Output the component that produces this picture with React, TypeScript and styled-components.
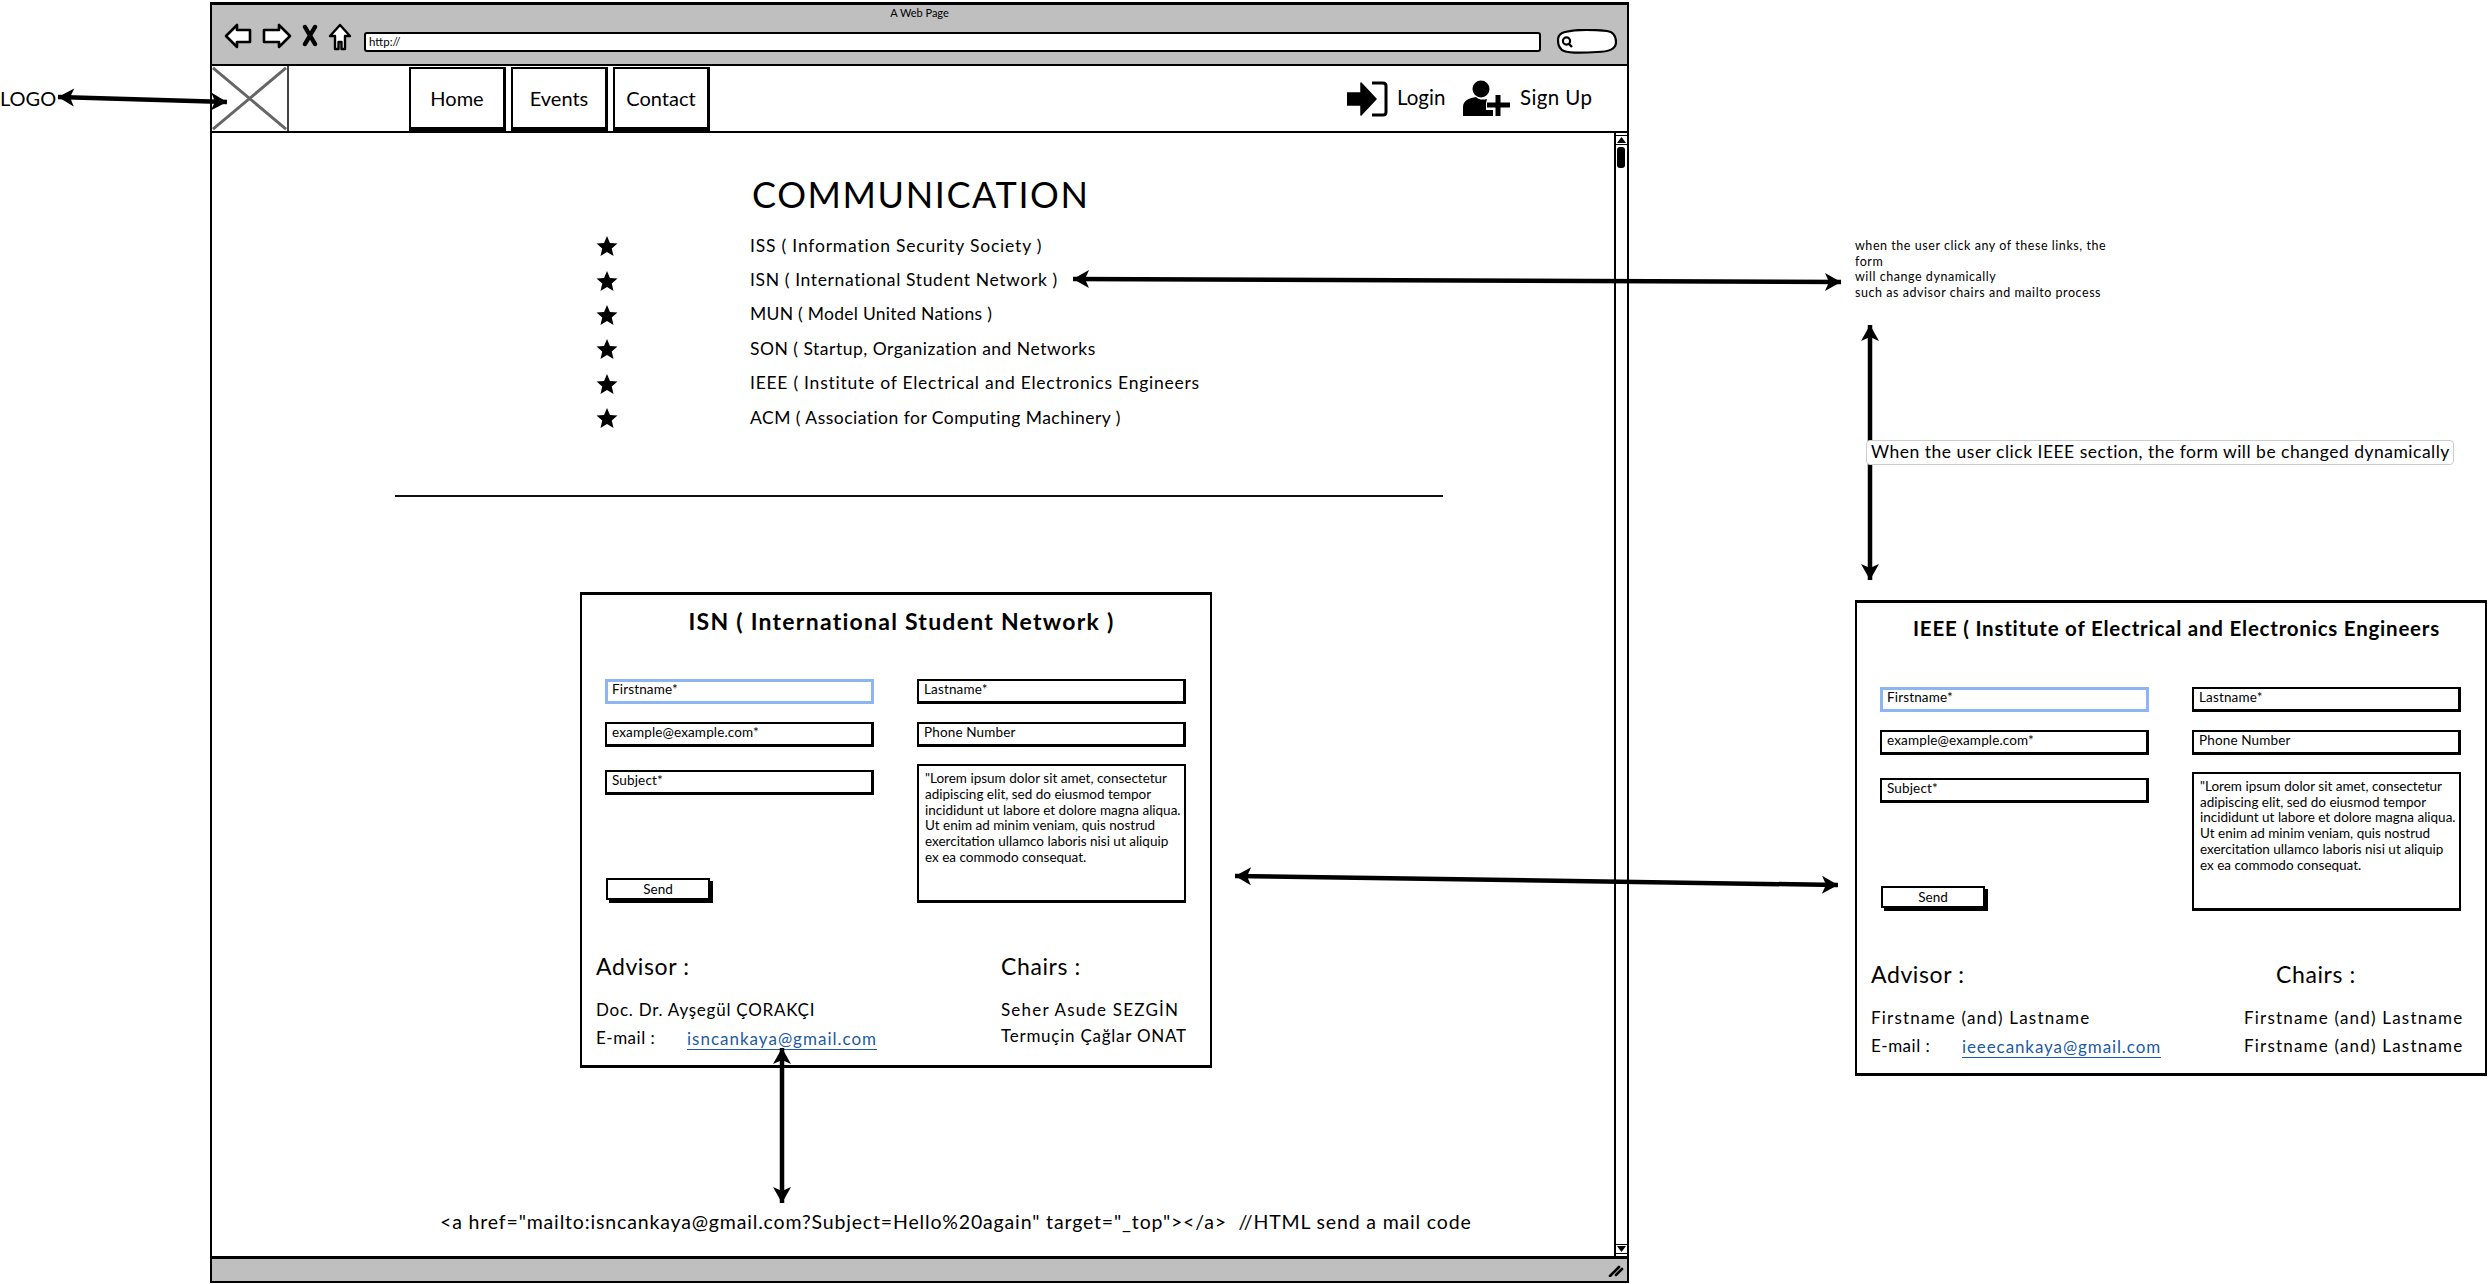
import React from "react";
import styled, { createGlobalStyle } from "styled-components";

const Global = createGlobalStyle`
  html, body { margin: 0; padding: 0; background: #fff; }
  body { font-family: "Lato", "Open Sans", sans-serif; color: #000; }
  * { box-sizing: border-box; }
`;

const Canvas = styled.div`
  position: relative;
  width: 2488px;
  height: 1284px;
  overflow: hidden;
  background: #fff;
`;

const BrowserWindow = styled.div`
  position: absolute;
  left: 210px;
  top: 2px;
  width: 1419px;
  height: 1281px;
  display: flex;
  flex-direction: column;
  border: 2px solid #000;
  border-top-width: 3px;
`;

const TitleBar = styled.div`
  height: 61px;
  flex: none;
  background: #bfbfbf;
  border-bottom: 2px solid #000;
  display: flex;
  flex-direction: column;
`;

const WindowTitle = styled.div`
  height: 18px;
  font-size: 11px;
  line-height: 15px;
  text-align: center;
`;

const Toolbar = styled.div`
  flex: 1;
  display: flex;
  align-items: flex-start;
  padding: 0 10px 0 12px;
`;

const ToolIcon = styled.svg`
  flex: none;
  display: block;
  margin-right: 10px;
`;

const SearchPill = styled.svg`
  flex: none;
  display: block;
  margin-top: 6px;
`;

const UrlBar = styled.div`
  flex: 1;
  height: 20px;
  margin: 9px 16px 0 2px;
  background: #fff;
  border: 2px solid #000;
  border-radius: 3px;
  font-size: 11.5px;
  line-height: 15px;
  padding-left: 3px;
`;

const NavBar = styled.div`
  height: 67px;
  flex: none;
  display: flex;
  background: #fff;
  border-bottom: 2px solid #000;
`;

const LogoBox = styled.svg`
  width: 77px;
  height: 65px;
  display: block;
  flex: none;
  border-right: 2px solid #444;
`;

const NavTabs = styled.div`
  display: flex;
  gap: 5px;
  margin-left: 120px;
  height: 65px;
  padding-top: 1px;
`;

const NavTab = styled.div`
  width: 97px;
  height: 64px;
  border: 2px solid #000;
  border-right-width: 3px;
  border-bottom-width: 4px;
  display: flex;
  align-items: center;
  justify-content: center;
  font-size: 20px;
`;

const UserActions = styled.div`
  margin-left: auto;
  display: flex;
  align-items: center;
  padding-right: 35px;
  height: 65px;
`;

const ActionIcon = styled.svg`
  display: block;
  flex: none;
  margin-right: 9px;
`;

const ActionLabel = styled.span<{ $width: number; $spacing: number }>`
  width: ${(p) => p.$width}px;
  font-size: 20.5px;
  letter-spacing: ${(p) => p.$spacing}px;
  white-space: nowrap;
  margin-top: -3px;
`;

const Viewport = styled.div`
  flex: 1;
  min-height: 0;
  display: flex;
`;

const Page = styled.div`
  flex: 1;
  min-width: 0;
  background: #fff;
`;

const PageTitle = styled.h1`
  margin: 43px 0 0 540px;
  font-size: 36px;
  line-height: 36px;
  font-weight: 400;
  letter-spacing: 1.6px;
`;

const OrgList = styled.ul`
  list-style: none;
  margin: 16px 0 0 384px;
  padding: 0;
`;

const OrgRow = styled.li<{ $spacing: number }>`
  height: 34.4px;
  display: flex;
  align-items: center;
  font-size: 17.5px;
  letter-spacing: ${(p) => p.$spacing}px;
  white-space: nowrap;
`;

const Star = styled.svg`
  display: block;
  flex: none;
  width: 22px;
  height: 22px;
  margin-right: 132px;
  margin-top: 2px;
`;

const Divider = styled.hr`
  margin: 61px 0 0 183px;
  width: 1048px;
  height: 2px;
  border: 0;
  background: #111;
`;

const PageCard = styled.div`
  margin: 95px 0 0 368px;
  width: 632px;
`;

const CodeLine = styled.div`
  margin: 142px 0 0 228px;
  font-size: 19.5px;
  line-height: 24px;
  letter-spacing: 0.84px;
  white-space: pre;
`;

const Scrollbar = styled.div`
  width: 13px;
  flex: none;
  border-left: 2px solid #000;
  display: flex;
  flex-direction: column;
  background: #fff;
  padding: 2px 0 2px;
`;

const ScrollButton = styled.div`
  height: 10px;
  flex: none;
  border-bottom: 1px solid #000;
  border-top: 1px solid #000;
  display: flex;
  align-items: center;
  justify-content: center;
`;

const ScrollGlyph = styled.svg`
  width: 9px;
  height: 6px;
  display: block;
`;

const ScrollThumb = styled.div`
  height: 21px;
  width: 8px;
  flex: none;
  margin: 2px 0 0 1px;
  background: #000;
  border-radius: 3px;
`;

const ScrollTrack = styled.div`
  flex: 1;
`;

const StatusBar = styled.div`
  height: 25px;
  flex: none;
  background: #bfbfbf;
  border-top: 3px solid #000;
  display: flex;
  justify-content: flex-end;
  align-items: center;
  padding-right: 3px;
`;

const Grip = styled.svg`
  width: 16px;
  height: 14px;
  display: block;
`;

const FormCardBox = styled.section`
  width: 632px;
  height: 476px;
  border: 2px solid #000;
  border-top-width: 3px;
  border-bottom-width: 3px;
  background: #fff;
`;

const FormCardTitle = styled.h2<{ $top: number; $size: number; $spacing: number }>`
  margin: ${(p) => p.$top}px 0 ${(p) => 54 - p.$top}px 11px;
  height: 30px;
  font-size: ${(p) => p.$size}px;
  line-height: 30px;
  letter-spacing: ${(p) => p.$spacing}px;
  font-weight: 700;
  text-align: center;
  white-space: nowrap;
`;

const FormGrid = styled.div`
  display: grid;
  grid-template-columns: 269px 269px;
  column-gap: 43px;
  padding-left: 23px;
  height: 224px;
`;

const FormColumn = styled.div`
  display: flex;
  flex-direction: column;
`;

const Field = styled.div<{ $focus?: boolean; $mt?: number }>`
  height: 25px;
  flex: none;
  margin-top: ${(p) => p.$mt ?? 0}px;
  border: ${(p) => (p.$focus ? "3px solid #8db5f2" : "2px solid #000")};
  border-bottom-width: 3px;
  border-right-width: 3px;
  font-size: 13.5px;
  line-height: ${(p) => (p.$focus ? 15 : 17)}px;
  padding-left: ${(p) => (p.$focus ? 4 : 5)}px;
  letter-spacing: 0.15px;
  white-space: nowrap;
`;

const MessageBox = styled.div`
  height: 139px;
  margin-top: 17px;
  border: 2px solid #000;
  border-bottom-width: 3px;
  font-size: 13.5px;
  line-height: 15.7px;
  padding: 5px 0 0 6px;
  white-space: pre;
`;

const SendButton = styled.div`
  width: 104px;
  height: 22px;
  margin: 83px 0 0 1px;
  border: 2px solid #000;
  box-shadow: 3px 3px 0 #000;
  font-size: 13.5px;
  line-height: 18px;
  text-align: center;
`;

const ContactGrid = styled.div<{ $col: number }>`
  display: grid;
  grid-template-columns: ${(p) => p.$col}px 1fr;
  margin-top: 48px;
  padding-left: 14px;
`;

const ContactColumn = styled.div``;

const ContactHeading = styled.div<{ $indent?: number }>`
  height: 30px;
  margin: 0 0 15px ${(p) => p.$indent ?? 0}px;
  font-size: 23px;
  line-height: 30px;
  letter-spacing: 0.6px;
`;

const ContactLine = styled.div<{ $height?: number; $spacing: number }>`
  height: ${(p) => p.$height ?? 28}px;
  font-size: 17px;
  line-height: 28px;
  letter-spacing: ${(p) => p.$spacing}px;
  white-space: nowrap;
  display: flex;
`;

const MailLabel = styled.span`
  width: 91px;
  letter-spacing: 0.5px;
`;

const MailLink = styled.a`
  color: #1c5aa3;
  height: 25px;
  line-height: 27px;
  margin-top: 1px;
  border-bottom: 1.5px solid #1c5aa3;
  text-decoration: none;
`;

const FloatingCard = styled.div`
  position: absolute;
  left: 1855px;
  top: 600px;
`;

const LogoLabel = styled.div`
  position: absolute;
  left: 0;
  top: 87px;
  font-size: 20px;
  line-height: 22px;
`;

const NoteText = styled.div`
  position: absolute;
  left: 1855px;
  top: 238px;
  font-size: 12.5px;
  line-height: 15.7px;
  letter-spacing: 0.55px;
  white-space: pre;
`;

const Tooltip = styled.div`
  position: absolute;
  left: 1866px;
  top: 440px;
  width: 588px;
  height: 25px;
  background: #fff;
  border: 1px solid #ccc;
  border-radius: 4px;
  font-size: 17.5px;
  line-height: 22px;
  padding-left: 4px;
  letter-spacing: 0.5px;
  white-space: nowrap;
`;

const ArrowLayer = styled.svg`
  position: absolute;
  left: 0;
  top: 0;
  width: 2488px;
  height: 1284px;
  pointer-events: none;
`;

function head(x: number, y: number, ang: number) {
  const pt = (d: number, w: number) =>
    `${x - Math.cos(ang) * d - Math.sin(ang) * w},${y - Math.sin(ang) * d + Math.cos(ang) * w}`;
  return [pt(0, 0), pt(16, 9), pt(12, 0), pt(16, -9)].join(" ");
}

const DoubleArrow = ({ x1, y1, x2, y2 }: { x1: number; y1: number; x2: number; y2: number }) => {
  const a = Math.atan2(y2 - y1, x2 - x1);
  return (
    <g>
      <line x1={x1} y1={y1} x2={x2} y2={y2} stroke="#000" strokeWidth={4.5} />
      <polygon points={head(x2, y2, a)} fill="#000" />
      <polygon points={head(x1, y1, a + Math.PI)} fill="#000" />
    </g>
  );
};

const lorem = `"Lorem ipsum dolor sit amet, consectetur
adipiscing elit, sed do eiusmod tempor
incididunt ut labore et dolore magna aliqua.
Ut enim ad minim veniam, quis nostrud
exercitation ullamco laboris nisi ut aliquip
ex ea commodo consequat.`;

interface Person {
  name: string;
  spacing: number;
}

interface CardProps {
  title: string;
  titleTop: number;
  titleSize: number;
  titleSpacing: number;
  col: number;
  chairsIndent?: number;
  advisor: Person;
  mail: string;
  mailSpacing: number;
  chairs: Person[];
  chairHeight: number;
}

const FormCard = (p: CardProps) => (
  <FormCardBox>
    <FormCardTitle $top={p.titleTop} $size={p.titleSize} $spacing={p.titleSpacing}>
      {p.title}
    </FormCardTitle>
    <FormGrid>
      <FormColumn>
        <Field $focus>Firstname*</Field>
        <Field $mt={18}>example@example.com*</Field>
        <Field $mt={23}>Subject*</Field>
        <SendButton>Send</SendButton>
      </FormColumn>
      <FormColumn>
        <Field>Lastname*</Field>
        <Field $mt={18}>Phone Number</Field>
        <MessageBox>{lorem}</MessageBox>
      </FormColumn>
    </FormGrid>
    <ContactGrid $col={p.col}>
      <ContactColumn>
        <ContactHeading>Advisor :</ContactHeading>
        <ContactLine $spacing={p.advisor.spacing}>{p.advisor.name}</ContactLine>
        <ContactLine $spacing={p.mailSpacing}>
          <MailLabel>E-mail :</MailLabel>
          <MailLink href={`mailto:${p.mail}`}>{p.mail}</MailLink>
        </ContactLine>
      </ContactColumn>
      <ContactColumn>
        <ContactHeading $indent={p.chairsIndent}>Chairs :</ContactHeading>
        {p.chairs.map((c, i) => (
          <ContactLine key={i} $height={p.chairHeight} $spacing={c.spacing}>
            {c.name}
          </ContactLine>
        ))}
      </ContactColumn>
    </ContactGrid>
  </FormCardBox>
);

const orgs = [
  { label: "ISS ( Information Security Society )", spacing: 0.8 },
  { label: "ISN ( International Student Network )", spacing: 0.63 },
  { label: "MUN ( Model United Nations )", spacing: 0.27 },
  { label: "SON ( Startup, Organization and Networks ", spacing: 0.5 },
  { label: "IEEE ( Institute of Electrical and Electronics Engineers", spacing: 0.75 },
  { label: "ACM ( Association for Computing Machinery )", spacing: 0.47 },
];

const blankName = { name: "Firstname (and) Lastname", spacing: 1.2 };

export default function App() {
  return (
    <Canvas>
      <Global />
      <BrowserWindow>
        <TitleBar>
          <WindowTitle>A Web Page</WindowTitle>
          <Toolbar>
            <ToolIcon width="28" height="26" viewBox="0 0 28 26">
              <path d="M2 13 L13 2 V7 H26 V19 H13 V24 Z" fill="#fff" stroke="#000" strokeWidth="2.6" strokeLinejoin="round" />
            </ToolIcon>
            <ToolIcon width="30" height="26" viewBox="0 0 30 26">
              <path d="M28 13 L17 2 V7 H2 V19 H17 V24 Z" fill="#fff" stroke="#000" strokeWidth="2.6" strokeLinejoin="round" />
            </ToolIcon>
            <ToolIcon width="16" height="26" viewBox="0 0 16 26">
              <path d="M3 4 L13 21 M13 4 L3 21" stroke="#000" strokeWidth="4.4" strokeLinecap="round" fill="none" />
            </ToolIcon>
            <ToolIcon width="24" height="28" viewBox="0 0 24 28">
              <path d="M12 2 L22 13 H17 V26 H13.5 V19 H10.5 V26 H7 V13 H2 Z" fill="#fff" stroke="#000" strokeWidth="2.4" strokeLinejoin="round" />
            </ToolIcon>
            <UrlBar>http://</UrlBar>
            <SearchPill width="60" height="25" viewBox="0 0 60 25">
              <path d="M8 3 C20 0 40 1 50 2 C57 3 59 8 59 13 C59 20 52 23 40 23 C25 24 12 24 7 22 C2 20 1 15 1 11 C1 7 4 4 8 3 Z" fill="#fff" stroke="#000" strokeWidth="2.2" />
              <circle cx="9.5" cy="12" r="3.6" fill="none" stroke="#000" strokeWidth="2.2" />
              <path d="M12 15 L15 18" stroke="#000" strokeWidth="2.4" />
            </SearchPill>
          </Toolbar>
        </TitleBar>
        <NavBar>
          <LogoBox viewBox="0 0 77 65">
            <path d="M1 1 L76 64 M76 1 L1 64" stroke="#666" strokeWidth="3" />
          </LogoBox>
          <NavTabs>
            <NavTab>Home</NavTab>
            <NavTab>Events</NavTab>
            <NavTab>Contact</NavTab>
          </NavTabs>
          <UserActions>
            <ActionIcon width="41" height="36" viewBox="0 0 41 36">
              <path d="M0 12 H14 V2 L29 18 L14 34 V24 H0 Z" fill="#000" strokeLinejoin="round" stroke="#000" strokeWidth="1.5" />
              <path d="M25 2 H36 Q39 2 39 5 V31 Q39 34 36 34 H25" fill="none" stroke="#000" strokeWidth="3" />
            </ActionIcon>
            <ActionLabel $width={65} $spacing={0}>Login</ActionLabel>
            <ActionIcon width="49" height="37" viewBox="0 0 49 37">
              <circle cx="19" cy="9" r="8.5" fill="#000" />
              <path d="M1 36 V27 C1 20 8 18 14 17 C17 20 21 20 25 19 L24 23 L24 30 L31 30 V36 Z" fill="#000" />
              <path d="M36 15 V36 M25 25 H48" stroke="#000" strokeWidth="5" fill="none" />
            </ActionIcon>
            <ActionLabel $width={72} $spacing={0.4}>Sign Up</ActionLabel>
          </UserActions>
        </NavBar>
        <Viewport>
          <Page>
            <PageTitle>COMMUNICATION</PageTitle>
            <OrgList>
              {orgs.map((o) => (
                <OrgRow key={o.label} $spacing={o.spacing}>
                  <Star viewBox="0 0 24 24">
                    <path d="M12 1 L15.2 8.6 L23.4 9.3 L17.2 14.7 L19.1 22.8 L12 18.5 L4.9 22.8 L6.8 14.7 L0.6 9.3 L8.8 8.6 Z" fill="#000" />
                  </Star>
                  {o.label}
                </OrgRow>
              ))}
            </OrgList>
            <Divider />
            <PageCard>
              <FormCard
                title="ISN ( International Student Network )"
                titleTop={11}
                titleSize={23}
                titleSpacing={1.25}
                col={405}
                advisor={{ name: "Doc. Dr. Ayşegül ÇORAKÇI", spacing: 0.76 }}
                mail="isncankaya@gmail.com"
                mailSpacing={1}
                chairs={[
                  { name: "Seher Asude SEZGİN", spacing: 1.2 },
                  { name: "Termuçin Çağlar ONAT", spacing: 0.75 },
                ]}
                chairHeight={26}
              />
            </PageCard>
            <CodeLine>{`<a href="mailto:isncankaya@gmail.com?Subject=Hello%20again" target="_top"></a>  //HTML send a mail code`}</CodeLine>
          </Page>
          <Scrollbar>
            <ScrollButton>
              <ScrollGlyph viewBox="0 0 9 6"><path d="M4.5 0 L9 6 H0 Z" fill="#000" /></ScrollGlyph>
            </ScrollButton>
            <ScrollThumb />
            <ScrollTrack />
            <ScrollButton>
              <ScrollGlyph viewBox="0 0 9 6"><path d="M0 0 H9 L4.5 6 Z" fill="#000" /></ScrollGlyph>
            </ScrollButton>
          </Scrollbar>
        </Viewport>
        <StatusBar>
          <Grip viewBox="0 0 16 14">
            <path d="M2 13 L11 4 M8 12 L14 6" stroke="#000" strokeWidth="2.6" strokeLinecap="round" />
          </Grip>
        </StatusBar>
      </BrowserWindow>

      <LogoLabel>LOGO</LogoLabel>
      <NoteText>{`when the user click any of these links, the
form
will change dynamically
such as advisor chairs and mailto process`}</NoteText>

      <FloatingCard>
        <FormCard
          title="IEEE ( Institute of Electrical and Electronics Engineers"
          titleTop={10}
          titleSize={20.5}
          titleSpacing={0.77}
          col={373}
          chairsIndent={32}
          advisor={blankName}
          mail="ieeecankaya@gmail.com"
          mailSpacing={0.9}
          chairs={[blankName, blankName]}
          chairHeight={28}
        />
      </FloatingCard>

      <ArrowLayer viewBox="0 0 2488 1284">
        <DoubleArrow x1={58} y1={97} x2={227} y2={102} />
        <DoubleArrow x1={1073} y1={279} x2={1841} y2={282} />
        <DoubleArrow x1={1870} y1={325} x2={1870} y2={580} />
        <DoubleArrow x1={782} y1={1048} x2={782} y2={1203} />
        <DoubleArrow x1={1235} y1={876} x2={1838} y2={885} />
      </ArrowLayer>
      <Tooltip>When the user click IEEE section, the form will be changed dynamically</Tooltip>
    </Canvas>
  );
}
